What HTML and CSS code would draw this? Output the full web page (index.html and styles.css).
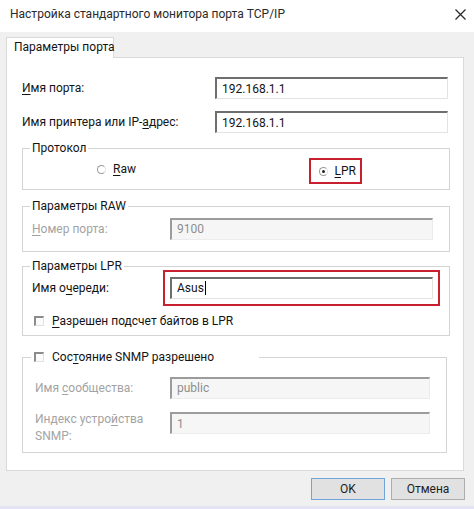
FILE: index.html
```html
<!DOCTYPE html>
<html>
<head>
  <title>Настройка стандартного монитора порта TCP/IP</title>
  <link rel="stylesheet" href="styles.css">
</head>
<body>
  <div class="titlebar">
    <span class="title">Настройка стандартного монитора порта TCP/IP</span>
    <svg class="close" width="11" height="11" viewBox="0 0 11 11">
      <path d="M0.5 0.5 L10.5 10.5 M10.5 0.5 L0.5 10.5" stroke="#2b2b2b" stroke-width="1.3" fill="none"/>
    </svg>
  </div>

  <div class="dialog">
    <div class="tabs">
      <div class="tab">Параметры порта</div>
    </div>

    <div class="panel">
      <div class="field">
        <span class="label"><u>И</u>мя порта:</span>
        <div class="input">192.168.1.1</div>
      </div>
      <div class="field second">
        <span class="label">Имя принтера или IP-<u>а</u>дрес:</span>
        <div class="input">192.168.1.1</div>
      </div>

      <!-- protocol -->
      <fieldset class="group protocol">
        <legend>Протокол</legend>
        <div class="radios">
          <label class="radio"><span class="dot"></span><span><u>R</u>aw</span></label>
          <label class="radio checked"><span class="dot"></span><span><u>L</u>PR</span></label>
        </div>
      </fieldset>

      <!-- raw settings -->
      <fieldset class="group raw">
        <legend>Параметры RAW</legend>
        <div class="row disabled">
          <span class="label"><u>Н</u>омер порта:</span>
          <div class="input">9100</div>
        </div>
      </fieldset>

      <!-- lpr settings -->
      <fieldset class="group lpr">
        <legend>Параметры LPR</legend>
        <div class="row">
          <span class="label">Имя о<u>ч</u>ереди:</span>
          <div class="input marked"><span>Asus</span><span class="caret"></span></div>
        </div>
        <label class="check"><span class="box"></span><span><u>Р</u>азрешен подсчет байтов в LPR</span></label>
      </fieldset>

      <!-- snmp -->
      <fieldset class="group snmp">
        <legend><label class="check"><span class="box"></span><span>Сос<u>т</u>ояние SNMP разрешено</span></label></legend>
        <div class="row disabled">
          <span class="label">Имя <u>с</u>ообщества:</span>
          <div class="input">public</div>
        </div>
        <div class="row disabled tall">
          <span class="label">Индекс устро<u>й</u>ства<br>SNMP:</span>
          <div class="input">1</div>
        </div>
      </fieldset>
    </div>

    <div class="buttons">
      <button class="btn default">OK</button>
      <button class="btn">Отмена</button>
    </div>
  </div>
</body>
</html>
```

FILE: styles.css
```css
* {
  box-sizing: border-box;
}
body {
  margin: 0;
  width: 474px;
  height: 509px;
  overflow: hidden;
  background: #f0f0f0;
  font-family: Roboto, "Noto Sans", sans-serif;
  font-size: 12px;
  color: #141414;
  border-bottom: 3px solid #e4e4f4;
}
u {
  text-decoration-thickness: 1px;
  text-underline-offset: 2px;
}
.titlebar {
  height: 32px;
  background: #fff;
  display: flex;
  align-items: center;
  justify-content: space-between;
  padding: 0 8px 4px 10px;
}
.title {
  color: #2a2a2a;
}
.dialog {
  padding: 5px 9px 0 6px;
}
.tabs {
  display: flex;
}
.tab {
  position: relative;
  z-index: 1;
  width: 108px;
  height: 21px;
  margin-bottom: -1px;
  padding: 0 7px;
  line-height: 19px;
  white-space: nowrap;
  background: #fff;
  border: 1px solid #d9d9d9;
  border-bottom: none;
}
.panel {
  width: 458px;
  height: 414px;
  background: #fff;
  border: 1px solid #d9d9d9;
  padding: 19px 15px 0 15px;
}
.field {
  display: grid;
  grid-template-columns: 193px 1fr;
  align-items: center;
  height: 22px;
}
.field.second {
  margin-top: 12px;
}
.input {
  height: 22px;
  padding: 0 5px;
  line-height: 20px;
  background: #fff;
  border: 1px solid #e3e3e3;
  border-top: 2px solid #6e6e6e;
  border-left: 2px solid #6e6e6e;
  display: flex;
  align-items: center;
}
.caret {
  width: 1px;
  height: 14px;
  background: #000;
  margin-left: 1px;
}
.marked {
  outline: 2px solid #c9202f;
  outline-offset: 5px;
}
.group {
  margin: 8px -2px 0 0;
  padding: 2px 16px 11px 9px;
  border: 1px solid #d4d4d4;
  min-width: 0;
}
.group legend {
  margin-left: -2px;
  padding: 0 2px;
  line-height: 16px;
}
.group.protocol {
  margin-top: 7px;
}
.radios {
  display: grid;
  grid-template-columns: 1fr 1fr;
  height: 20px;
  align-items: center;
}
.radio {
  display: flex;
  align-items: center;
  gap: 7px;
  padding-left: 65px;
}
.radio.checked {
  justify-self: start;
  height: 18px;
  margin: 4px 0 0 80px;
  padding: 0 2px 0 6px;
  outline: 2px solid #c9202f;
  outline-offset: 2px;
}
.dot {
  width: 9px;
  height: 9px;
  border-radius: 50%;
  border: 1px solid #9a9a9a;
  border-right-color: #e0e0e0;
  background: #fff;
  display: flex;
  align-items: center;
  justify-content: center;
}
.radio.checked .dot::after {
  content: "";
  width: 3px;
  height: 3px;
  border-radius: 50%;
  background: #222;
}
.row {
  display: grid;
  grid-template-columns: 138px 1fr;
  align-items: center;
  min-height: 23px;
}
.group.raw .row {
  margin-top: 1px;
}
.disabled .label {
  color: #a3a3a3;
}
.disabled .input {
  background: #f6f6f6;
  color: #8e8e8e;
  border-color: #ececec;
  border-top-color: #9c9c9c;
  border-left-color: #9c9c9c;
}
.group.lpr {
  margin-top: 6px;
  padding-bottom: 5px;
}
.check {
  display: flex;
  align-items: center;
  gap: 8px;
  height: 18px;
}
.group.lpr .check {
  margin-top: 13px;
  padding-left: 2px;
}
.box {
  width: 10px;
  height: 10px;
  background: #fbfbfb;
  border: 1px solid #e2e2e2;
  border-top: 2px solid #8c8c8c;
  border-left: 2px solid #8c8c8c;
}
.group.snmp {
  margin: 13px 1px 0 0;
  padding-top: 11px;
  padding-bottom: 7px;
}
.group.snmp legend {
  width: 228px;
  margin-left: -1px;
  padding: 0 0 0 3px;
}
.group.snmp .check {
  height: 16px;
}
.group.snmp .label {
  padding-left: 3px;
}
.row.tall {
  margin-top: 13px;
  align-items: start;
}
.row.tall .label {
  line-height: 17px;
  margin-top: -1px;
}
.buttons {
  display: flex;
  justify-content: flex-end;
  gap: 6px;
  margin-top: 7px;
}
.btn {
  width: 74px;
  height: 22px;
  font-family: inherit;
  font-size: 12px;
  color: #1e1e1e;
  background: #e1e1e1;
  border: 1px solid #adadad;
  padding: 0;
}
.btn.default {
  border-color: #6fa6da;
}
```
